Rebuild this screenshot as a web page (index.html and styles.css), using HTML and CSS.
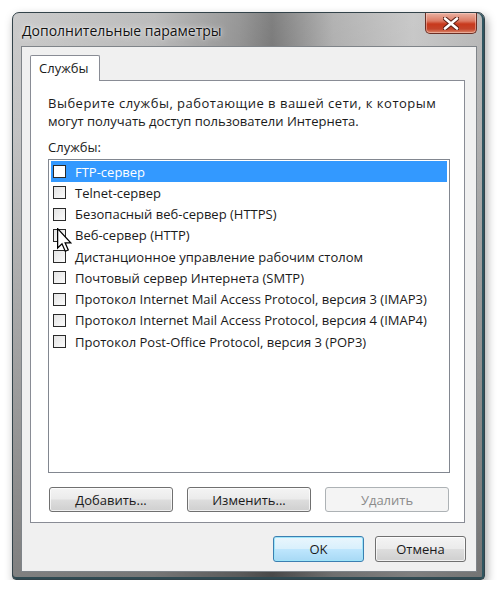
FILE: index.html
```html
<!DOCTYPE html>
<html lang="ru">
  <head>
    <meta charset="UTF-8" />
    <meta name="viewport" content="width=device-width, initial-scale=1.0" />
    <title>Дополнительные параметры</title>
    <link rel="stylesheet" href="styles.css">
  </head>
  <body>
    <div class="window">
      <div class="titlebar">
        <span class="title">Дополнительные параметры</span>
        <button class="close" type="button" aria-label="Закрыть">
          <svg width="16" height="13" viewBox="0 0 16 13">
            <path d="M2 1.5 L14 11.5 M14 1.5 L2 11.5" stroke="#5a1f14" stroke-width="4.6" stroke-linecap="round" />
            <path d="M2 1.5 L14 11.5 M14 1.5 L2 11.5" stroke="#ffffff" stroke-width="2.6" stroke-linecap="round" />
          </svg>
        </button>
      </div>

      <div class="client">
        <div class="tabs">
          <div class="tab">Службы</div>
        </div>

        <div class="panel">
          <p class="intro"><span class="wide">Выберите службы, работающие в вашей сети, к которым</span><br />могут получать доступ пользователи Интернета.</p>
          <div class="label">Службы:</div>

          <ul class="list">
            <li class="item selected"><span class="check"></span>FTP-сервер</li>
            <li class="item"><span class="check"></span>Telnet-сервер</li>
            <li class="item"><span class="check"></span>Безопасный веб-сервер (HTTPS)</li>
            <li class="item"><span class="check"></span>Веб-сервер (HTTP)</li>
            <li class="item"><span class="check"></span>Дистанционное управление рабочим столом</li>
            <li class="item"><span class="check"></span>Почтовый сервер Интернета (SMTP)</li>
            <li class="item"><span class="check"></span>Протокол Internet Mail Access Protocol, версия 3 (IMAP3)</li>
            <li class="item"><span class="check"></span>Протокол Internet Mail Access Protocol, версия 4 (IMAP4)</li>
            <li class="item"><span class="check"></span>Протокол Post-Office Protocol, версия 3 (POP3)</li>
          </ul>

          <div class="actions">
            <button class="btn" type="button">Добавить...</button>
            <button class="btn" type="button">Изменить...</button>
            <button class="btn" type="button" disabled>Удалить</button>
          </div>
        </div>

        <div class="footer">
          <button class="btn btn-default" type="button">OK</button>
          <button class="btn" type="button">Отмена</button>
        </div>
      </div>
    </div>

    <svg class="cursor" width="15" height="25" viewBox="0 0 12 20">
      <path d="M0.5 0.5 L0.5 16 L4 12.6 L6.6 18.6 L9 17.6 L6.5 11.8 L11 11.8 Z" fill="#ffffff" stroke="#000000" stroke-width="1" stroke-linejoin="miter" />
    </svg>
  </body>
</html>
```

FILE: styles.css
```css
body {
  margin: 0;
  background: #ffffff;
  font-family: "Open Sans", "Noto Sans", sans-serif;
  font-size: 13px;
  color: #1a1a1a;
}

.window {
  box-sizing: border-box;
  width: 473px;
  margin: 12px 0 0 12px;
  border: 1px solid #33434a;
  border-radius: 7px 7px 4px 4px;
  background:
    linear-gradient(180deg, rgba(255, 255, 255, 0.12) 0%, rgba(0, 0, 0, 0) 20%, rgba(0, 0, 0, 0.35) 100%),
    linear-gradient(90deg, #c4c4c4 0%, #b4b4b4 30%, #8a8a8a 48%, #6f6f6f 55%, #a9a9a9 68%, #c2c2c2 85%, #b0b0b0 100%);
  box-shadow: inset -2px 0 0 #2f5560, inset 0 -2px 0 #2f4a52, 2px 4px 10px rgba(0, 0, 0, 0.35);
}

.titlebar {
  display: flex;
  justify-content: space-between;
  align-items: flex-start;
  height: 33px;
  padding: 0 7px 0 9px;
}

.title {
  margin-top: 8px;
  font-size: 14px;
  color: #111;
  text-shadow: 0 0 6px rgba(255, 255, 255, 0.9), 0 0 2px rgba(255, 255, 255, 0.8);
}

.close {
  display: flex;
  align-items: center;
  justify-content: center;
  width: 52px;
  height: 21px;
  padding: 0;
  border: 1px solid #6b2f25;
  border-top: none;
  border-radius: 0 0 5px 5px;
  background: linear-gradient(180deg, #e9b2a3 0%, #dc7a63 40%, #c8391c 55%, #c4442a 80%, #dc8a6e 100%);
  box-shadow: inset 0 0 0 1px rgba(255, 220, 210, 0.45);
}

.client {
  margin: 0 7px 7px 8px;
  padding: 8px 11px 9px 8px;
  border: 1px solid #7f8489;
  background: #f0f0f0;
}

.tabs {
  display: flex;
  position: relative;
  z-index: 1;
}

.tab {
  box-sizing: border-box;
  width: 70px;
  height: 26px;
  margin-bottom: -1px;
  padding: 3px 0 0 8px;
  border: 1px solid #898c95;
  border-bottom: none;
  border-radius: 2px 2px 0 0;
  background: #ffffff;
}

.panel {
  padding: 13px 14px 10px 17px;
  border: 1px solid #898c95;
  background: #ffffff;
}

.intro {
  margin: 0;
  line-height: 18px;
}

.wide {
  letter-spacing: 0.5px;
}

.label {
  margin-top: 10px;
  line-height: 15px;
}

.list {
  box-sizing: border-box;
  height: 314px;
  margin: 4px 0 0;
  padding: 1px 2px;
  list-style: none;
  border: 1px solid #828790;
}

.item {
  display: flex;
  align-items: center;
  height: 21.25px;
  padding-left: 2px;
  white-space: nowrap;
}

.item.selected {
  background: #3399ff;
  color: #ffffff;
}

.check {
  box-sizing: border-box;
  width: 13px;
  height: 13px;
  margin-right: 9px;
  border: 1px solid #2a2a2a;
  background: linear-gradient(135deg, #e4e4e4 0%, #fbfbfb 100%);
}

.item.selected .check {
  background: #ffffff;
}

.actions {
  display: flex;
  justify-content: space-between;
  margin-top: 14px;
  padding: 0 1px;
}

.btn {
  box-sizing: border-box;
  width: 124px;
  height: 25px;
  padding: 0;
  border: 1px solid #707070;
  border-radius: 3px;
  background: linear-gradient(180deg, #f4f4f4 0%, #ebebeb 48%, #dddddd 52%, #cfcfcf 100%);
  box-shadow: inset 0 0 0 1px rgba(255, 255, 255, 0.7);
  font-family: inherit;
  font-size: 13px;
  color: #1a1a1a;
}

.btn:disabled {
  border-color: #adb2b5;
  background: #f4f4f4;
  box-shadow: none;
  color: #8b8b8b;
}

.footer {
  display: flex;
  justify-content: flex-end;
  gap: 11px;
  margin: 13px -1px 0 0;
}

.footer .btn {
  width: 91px;
  height: 26px;
}

.btn-default {
  border-color: #3c7fb1;
  background: linear-gradient(180deg, #eaf6fd 0%, #d9f0fc 48%, #bee6fd 52%, #a7d9f5 100%);
  box-shadow: inset 0 0 0 1px #9ee5f9;
}

.cursor {
  position: absolute;
  left: 57px;
  top: 228px;
}
```
